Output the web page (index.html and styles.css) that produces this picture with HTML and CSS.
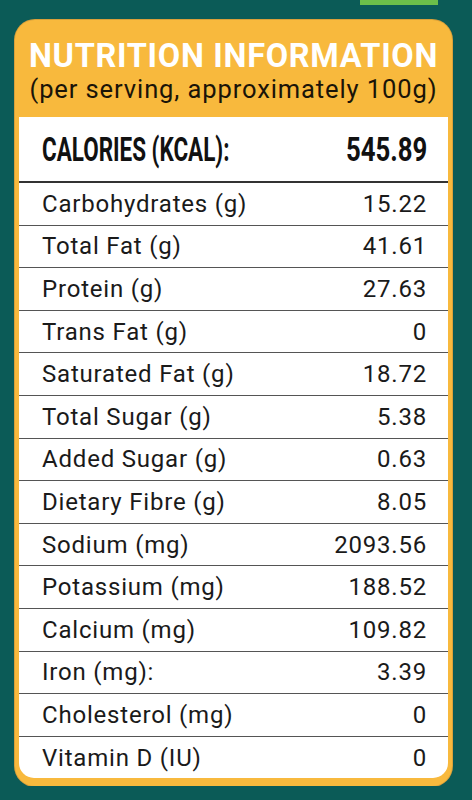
FILE: index.html
```html
<!DOCTYPE html>
<html>
<head>
<meta charset="utf-8">
<title>Nutrition Information</title>
<link rel="stylesheet" href="styles.css">
</head>
<body>
<div class="topbar"><div class="tab"></div></div>
<div class="card">
	<div class="head">
		<div class="title">NUTRITION INFORMATION</div>
		<div class="sub">(per serving, approximately 100g)</div>
	</div>
	<div class="facts">
		<div class="kcal"><span class="klabel">Calories (kcal):</span><span class="kvalue">545.89</span></div>
		<div class="row"><span>Carbohydrates (g)</span><span>15.22</span></div>
		<div class="row"><span>Total Fat (g)</span><span>41.61</span></div>
		<div class="row"><span>Protein (g)</span><span>27.63</span></div>
		<div class="row"><span>Trans Fat (g)</span><span>0</span></div>
		<div class="row"><span>Saturated Fat (g)</span><span>18.72</span></div>
		<div class="row"><span>Total Sugar (g)</span><span>5.38</span></div>
		<div class="row"><span>Added Sugar (g)</span><span>0.63</span></div>
		<div class="row"><span>Dietary Fibre (g)</span><span>8.05</span></div>
		<div class="row"><span>Sodium (mg)</span><span>2093.56</span></div>
		<div class="row"><span>Potassium (mg)</span><span>188.52</span></div>
		<div class="row"><span>Calcium (mg)</span><span>109.82</span></div>
		<div class="row"><span>Iron (mg):</span><span>3.39</span></div>
		<div class="row"><span>Cholesterol (mg)</span><span>0</span></div>
		<div class="row last"><span>Vitamin D (IU)</span><span>0</span></div>
	</div>
</div>
</body>
</html>
```

FILE: styles.css
```css
body
{
	margin:0;
	background:#0b5b57;
	font-family:Roboto, "Liberation Sans", Arial, sans-serif;
}
.topbar
{
	height:5px;
	display:flex;
}
.tab
{
	width:78px;
	margin-left:360px;
	background:#6cbf4a;
}
.card
{
	width:429px;
	margin:15px 0 0 15px;
	padding:0 4px 8px 4px;
	background:#f8b93d;
	border-radius:20px;
	box-shadow:0 0 0 1px #d9a03a;
}
.head
{
	height:97px;
	display:flex;
	flex-direction:column;
	align-items:center;
}
.title
{
	margin-top:19px;
	font-size:32.5px;
	letter-spacing:0.7px;
	font-weight:bold;
	color:#fff;
	line-height:35px;
	white-space:nowrap;
}
.sub
{
	font-size:25.5px;
	letter-spacing:0.9px;
	color:#1a1408;
	line-height:30px;
	white-space:nowrap;
}
.facts
{
	background:#fff;
	border-radius:0 0 15px 15px;
}
.kcal
{
	height:64px;
	display:flex;
	justify-content:space-between;
	align-items:center;
	padding:0 21px 0 23px;
	border-bottom:2px solid #333;
	font-weight:bold;
	font-size:33px;
	text-transform:uppercase;
	color:#111;
	white-space:nowrap;
}
.klabel
{
	display:inline-block;
	transform:scaleX(0.68);
	transform-origin:left center;
}
.kvalue
{
	display:inline-block;
	transform:scaleX(0.78);
	transform-origin:right center;
}
.row
{
	height:41.6px;
	display:flex;
	justify-content:space-between;
	align-items:center;
	padding:0 21px 0 23px;
	border-bottom:1px solid #555;
	font-size:24px;
	letter-spacing:0.8px;
	color:#1a1a1a;
}
.row.last
{
	border-bottom:none;
}
```
